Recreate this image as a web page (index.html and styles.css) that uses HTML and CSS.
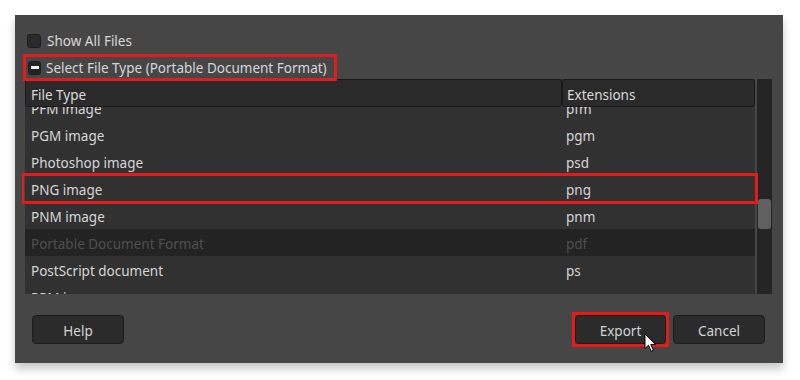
FILE: index.html
```html
<!DOCTYPE html>
<html>
<head>
<meta charset="utf-8">
<link rel="stylesheet" href="styles.css">
</head>
<body>
<div class="dialog">
  <div class="opt">
    <span class="check"></span>
    <span class="label">Show All Files</span>
  </div>
  <div class="opt opt-exp">
    <span class="check check-minus"><span class="dash"></span></span>
    <span class="label">Select File Type (Portable Document Format)</span>
  </div>
  <div class="table">
    <div class="view">
      <div class="head">
        <div class="hcell c1">File Type</div>
        <div class="hcell c2">Extensions</div>
      </div>
      <div class="body">
        <div class="rows">
          <div class="row"><span class="c1">PFM image</span><span class="c2">pfm</span></div>
          <div class="row"><span class="c1">PGM image</span><span class="c2">pgm</span></div>
          <div class="row"><span class="c1">Photoshop image</span><span class="c2">psd</span></div>
          <div class="row row-mark"><span class="c1">PNG image</span><span class="c2">png</span></div>
          <div class="row"><span class="c1">PNM image</span><span class="c2">pnm</span></div>
          <div class="row row-off"><span class="c1">Portable Document Format</span><span class="c2">pdf</span></div>
          <div class="row"><span class="c1">PostScript document</span><span class="c2">ps</span></div>
          <div class="row"><span class="c1">PPM image</span><span class="c2">ppm</span></div>
        </div>
      </div>
    </div>
    <div class="scroll"><div class="thumb"></div></div>
  </div>
  <div class="foot">
    <button class="btn">Help</button>
    <div class="spacer"></div>
    <span class="mark"><button class="btn btn-export">Export</button></span>
    <button class="btn">Cancel</button>
    <svg class="cursor" width="13" height="20" viewBox="0 0 13 20"><path d="M1 1 L1 15.5 L4.5 12.2 L7.2 18.3 L9.4 17.3 L6.8 11.4 L11.5 11.4 Z" fill="#fff" stroke="#000" stroke-width="1" stroke-linejoin="round"/></svg>
  </div>
</div>
</body>
</html>
```
FILE: styles.css
```css
html, body {
  margin: 0;
  padding: 0;
  background: #ffffff;
}
body {
  width: 800px;
  height: 380px;
  overflow: hidden;
  font-family: "Noto Sans", "Open Sans", sans-serif;
  font-size: 13.5px;
  color: #d6d6d6;
}
.dialog {
  margin: 15px 0 0 15px;
  width: 768px;
  height: 348px;
  box-sizing: border-box;
  background: #464646;
  box-shadow: 0 6px 8px rgba(0, 0, 0, 0.22);
  padding: 12px 11px 0 10px;
  display: flex;
  flex-direction: column;
  position: relative;
}
.opt {
  height: 27px;
  display: flex;
  align-items: center;
  gap: 6px;
  padding-left: 2px;
}
.opt .label {
  padding-top: 1px;
}
.opt-exp {
  align-self: flex-start;
  box-sizing: border-box;
  width: 308px;
  height: 21px;
  margin: 3px 0 0 1px;
  padding: 0 0 0 2px;
  gap: 5px;
  outline: 3px solid #e51b1b;
  position: relative;
  z-index: 2;
}
.check {
  width: 14px;
  height: 14px;
  box-sizing: border-box;
  background: #2a2a2a;
  border: 1px solid #1d1d1d;
  border-radius: 3px;
  display: flex;
  align-items: center;
  justify-content: center;
}
.check-minus {
  width: 13px;
  height: 14px;
  background: #232323;
}
.dash {
  width: 8px;
  height: 3px;
  background: #f2f2f2;
}
.label {
  line-height: 16px;
  white-space: nowrap;
}
.table {
  margin-top: 1px;
  height: 215px;
  display: flex;
}
.view {
  width: 732px;
  display: flex;
  flex-direction: column;
  background: #313131;
  position: relative;
  z-index: 1;
}
.head {
  display: flex;
  height: 28px;
  width: 730px;
  background: #313131;
}
.hcell {
  box-sizing: border-box;
  height: 28px;
  background: #2a2a2a;
  border: 1px solid #1a1a1a;
  border-radius: 3px;
  display: flex;
  align-items: center;
  padding-top: 3px;
  color: #dadada;
}
.head .c1 {
  width: 537px;
  padding-left: 5px;
}
.head .c2 {
  width: 193px;
  padding-left: 4px;
}
.body {
  flex: 1;
  overflow: hidden;
  margin: 0 -3px;
  padding: 0 3px;
}
.rows {
  margin-top: -13px;
}
.row {
  height: 27px;
  box-sizing: border-box;
  padding-top: 2px;
  display: flex;
  align-items: center;
}
.row .c1 {
  width: 531px;
  padding-left: 6px;
}
.row .c2 {
  padding-left: 4px;
}
.row-mark {
  outline: 3px solid #e51b1b;
  outline-offset: -1px;
  margin: 0 -1px 0 -2px;
  padding-left: 2px;
  position: relative;
}
.row-off {
  background: #232323;
  color: #4f4f4f;
}
.scroll {
  width: 16px;
  margin-left: 2px;
  background: #242424;
  position: relative;
}
.thumb {
  margin: 120px 1px 0 1px;
  height: 30px;
  background: #606060;
  border-radius: 3px;
}
.foot {
  display: flex;
  align-items: center;
  padding: 21px 7px 0 7px;
  gap: 7px;
  position: relative;
}
.spacer {
  flex: 1;
}
.btn {
  width: 92px;
  height: 29px;
  box-sizing: border-box;
  background: #2b2b2b;
  border: 1px solid #1c1c1c;
  border-radius: 4px;
  color: #d4d4d4;
  font-family: inherit;
  font-size: 13.5px;
  padding: 3px 0 0 0;
}
.mark {
  display: flex;
  outline: 3px solid #e51b1b;
}
.btn-export {
  width: 91px;
}
.cursor {
  position: absolute;
  left: 619px;
  top: 39px;
}
```
